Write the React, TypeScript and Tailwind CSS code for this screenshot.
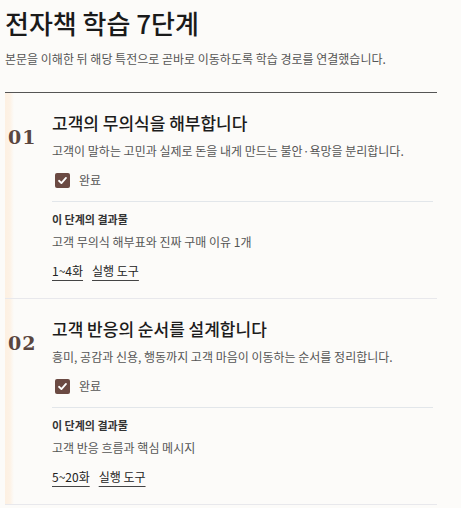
const steps = [
  {
    no: "01",
    title: "고객의 무의식을 해부합니다",
    desc: "고객이 말하는 고민과 실제로 돈을 내게 만드는 불안·욕망을 분리합니다.",
    result: "고객 무의식 해부표와 진짜 구매 이유 1개",
    range: "1~4화",
  },
  {
    no: "02",
    title: "고객 반응의 순서를 설계합니다",
    desc: "흥미, 공감과 신용, 행동까지 고객 마음이 이동하는 순서를 정리합니다.",
    result: "고객 반응 흐름과 핵심 메시지",
    range: "5~20화",
  },
];

const sans = "font-['Noto_Sans_CJK_KR','Noto_Sans',sans-serif]";

function CheckBox() {
  return (
    <span className="flex h-[15px] w-[15px] items-center justify-center rounded-[2px] bg-[#6b4a43]">
      <svg width="11" height="11" viewBox="0 0 12 12" fill="none">
        <path d="M2.2 6.3 L4.8 8.8 L9.8 3.2" stroke="#fff" strokeWidth="2" strokeLinecap="round" strokeLinejoin="round" />
      </svg>
    </span>
  );
}

function Step({ step }: { step: (typeof steps)[number] }) {
  return (
    <section className="flex border-b border-[#e8e8ec] bg-[linear-gradient(to_right,#fdf0e2_0px,#fdf2e6_5px,transparent_9px)]">
      <div className="w-[47px] shrink-0 pt-[30px] pl-[3px]">
        <span className="font-['DejaVu_Serif',serif] text-[19px] font-semibold tracking-[1px] text-[#5a4640]">{step.no}</span>
      </div>
      <div className="flex-1 pt-[18px] pb-[18px] pr-[4px]">
        <h2 className="text-[17px] leading-[24px] font-medium text-[#1c1c1c]">{step.title}</h2>
        <p className="mt-[7px] text-[12px] leading-[18px] text-[#555]">{step.desc}</p>
        <label className="mt-[11px] ml-[3px] flex items-center gap-[9px]">
          <CheckBox />
          <span className="text-[12px] text-[#555]">완료</span>
        </label>
        <div className="mt-[12px] border-t border-[#e2e6ea] pt-[9px]">
          <div className="text-[11px] leading-[16px] font-bold text-[#333]">이 단계의 결과물</div>
          <div className="mt-[6px] text-[12px] leading-[18px] text-[#555]">{step.result}</div>
          <div className="mt-[11px] flex gap-[9px] text-[12px] leading-[18px] text-[#222]">
            <a className="underline decoration-[#444] underline-offset-[4px]">{step.range}</a>
            <a className="underline decoration-[#444] underline-offset-[4px]">실행 도구</a>
          </div>
        </div>
      </div>
    </section>
  );
}

export default function App() {
  return (
    <div className={`min-h-screen bg-[#fcfbf9] ${sans}`}>
      <div className="w-[437px] pl-[5px] pt-[3px]">
        <h1 className="text-[26px] leading-[40px] font-medium text-[#1a1a1a]">전자책 학습 7단계</h1>
        <p className="mt-[6px] text-[12px] leading-[20px] text-[#555]">
          본문을 이해한 뒤 해당 특전으로 곧바로 이동하도록 학습 경로를 연결했습니다.
        </p>
        <div className="mt-[23px] border-t border-[#555]">
          {steps.map((s) => (
            <Step key={s.no} step={s} />
          ))}
        </div>
      </div>
    </div>
  );
}
